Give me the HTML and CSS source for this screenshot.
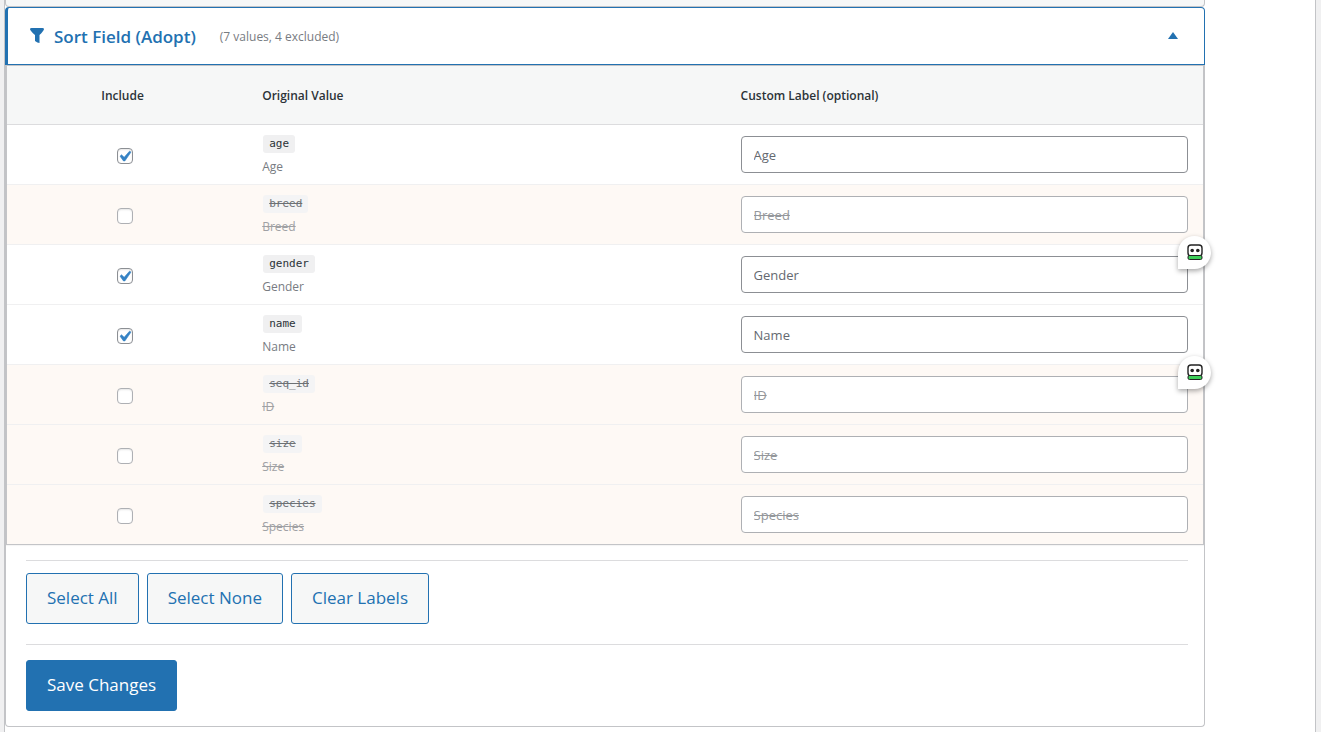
FILE: index.html
```
<!DOCTYPE html>
<html lang="en">
<head>
    <meta charset="UTF-8">
    <meta name="viewport" content="width=device-width, initial-scale=1.0">
    <title>Filter Values</title>
    <link rel="stylesheet" href="styles.css">
</head>
<body>

<main class="panel">
    <div class="group-closed"></div>

    <section class="group">
        <button type="button" class="group-header" aria-expanded="true">
            <svg class="icon-filter" viewBox="0 0 20 20" aria-hidden="true"><path d="M3 3.2Q3 2 4.5 2h11Q17 2 17 3.2 16.600 5 12.500 9v8q-2-.2-4.500-2V9Q3.400 5 3 3.200z"/></svg>
            <span class="group-title">Sort Field (Adopt)</span>
            <span class="group-count">(7 values, 4 excluded)</span>
            <svg class="icon-arrow" viewBox="0 0 10 8" aria-hidden="true"><path d="M0 7L5 0l5 7z"/></svg>
        </button>

        <div class="group-body">
            <table class="values">
                <thead>
                    <tr>
                        <th class="col-include">Include</th>
                        <th class="col-value">Original Value</th>
                        <th class="col-label">Custom Label (optional)</th>
                    </tr>
                </thead>
                <tbody>
                    <tr>
                        <td class="col-include"><input type="checkbox" id="inc-age" aria-label="Include age" checked></td>
                        <td><code>age</code><label class="name" for="inc-age">Age</label></td>
                        <td><input type="text" placeholder="Age" aria-label="Custom label for age"></td>
                    </tr>
                    <tr class="excluded">
                        <td class="col-include"><input type="checkbox" id="inc-breed" aria-label="Include breed"></td>
                        <td><code>breed</code><label class="name" for="inc-breed">Breed</label></td>
                        <td><input type="text" placeholder="Breed" aria-label="Custom label for breed"></td>
                    </tr>
                    <tr>
                        <td class="col-include"><input type="checkbox" id="inc-gender" aria-label="Include gender" checked></td>
                        <td><code>gender</code><label class="name" for="inc-gender">Gender</label></td>
                        <td>
                            <input type="text" placeholder="Gender" aria-label="Custom label for gender">
                            <span class="autofill"><svg viewBox="0 0 16 17" aria-hidden="true"><rect x="1" y="1" width="14" height="11" rx="3" fill="#fff" stroke="#222" stroke-width="1.4"/><rect x="1" y="11.5" width="14" height="4" rx="1.5" fill="#3ecf5a" stroke="#222"/><circle cx="5.2" cy="6.5" r="1.8" fill="#222"/><circle cx="10.8" cy="6.5" r="1.8" fill="#222"/></svg></span>
                        </td>
                    </tr>
                    <tr>
                        <td class="col-include"><input type="checkbox" id="inc-name" aria-label="Include name" checked></td>
                        <td><code>name</code><label class="name" for="inc-name">Name</label></td>
                        <td><input type="text" placeholder="Name" aria-label="Custom label for name"></td>
                    </tr>
                    <tr class="excluded">
                        <td class="col-include"><input type="checkbox" id="inc-seq" aria-label="Include seq_id"></td>
                        <td><code>seq_id</code><label class="name" for="inc-seq">ID</label></td>
                        <td>
                            <input type="text" placeholder="ID" aria-label="Custom label for seq_id">
                            <span class="autofill"><svg viewBox="0 0 16 17" aria-hidden="true"><rect x="1" y="1" width="14" height="11" rx="3" fill="#fff" stroke="#222" stroke-width="1.4"/><rect x="1" y="11.5" width="14" height="4" rx="1.5" fill="#3ecf5a" stroke="#222"/><circle cx="5.2" cy="6.5" r="1.8" fill="#222"/><circle cx="10.8" cy="6.5" r="1.8" fill="#222"/></svg></span>
                        </td>
                    </tr>
                    <tr class="excluded">
                        <td class="col-include"><input type="checkbox" id="inc-size" aria-label="Include size"></td>
                        <td><code>size</code><label class="name" for="inc-size">Size</label></td>
                        <td><input type="text" placeholder="Size" aria-label="Custom label for size"></td>
                    </tr>
                    <tr class="excluded">
                        <td class="col-include"><input type="checkbox" id="inc-species" aria-label="Include species"></td>
                        <td><code>species</code><label class="name" for="inc-species">Species</label></td>
                        <td><input type="text" placeholder="Species" aria-label="Custom label for species"></td>
                    </tr>
                </tbody>
            </table>

            <div class="actions">
                <button type="button" class="button">Select All</button>
                <button type="button" class="button">Select None</button>
                <button type="button" class="button">Clear Labels</button>
            </div>
            <div class="actions save">
                <button type="submit" class="button button-primary">Save Changes</button>
            </div>
        </div>
    </section>
</main>

</body>
</html>
```
FILE: styles.css
```
* {
    box-sizing: border-box;
}
body {
    margin: 0;
    background: #f0f0f1;
    color: #2c3338;
    font-family: "Open Sans", "Noto Sans", sans-serif;
    font-size: 13px;
}
.panel {
    min-height: 100vh;
    margin: 0 5px 0 4px;
    background: #fff;
    border: solid #c3c4c7;
    border-width: 0 1px;
}
.group-closed {
    max-width: 1200px;
    height: 7px;
    background: #f6f7f7;
    border: 1px solid #c3c4c7;
    border-top: 0;
    border-radius: 0 0 4px 4px;
}
.group {
    max-width: 1200px;
}
.group-header {
    display: flex;
    align-items: center;
    width: 100%;
    height: 58px;
    padding: 0 26px 0 19px;
    background: #fff;
    border: 1px solid #2271b1;
    border-left-width: 3px;
    border-radius: 4px 4px 0 0;
    color: #2271b1;
    font-family: inherit;
    text-align: left;
    cursor: pointer;
}
.icon-filter {
    width: 20px;
    height: 20px;
    fill: currentColor;
}
.group-title {
    margin-left: 7px;
    font-size: 17px;
    font-weight: 600;
}
.group-count {
    margin-left: 24px;
    color: #787c82;
    font-size: 12px;
}
.icon-arrow {
    width: 10px;
    height: 8px;
    margin-left: auto;
    fill: currentColor;
}
.group-body {
    padding-bottom: 15px;
    border: 1px solid #c3c4c7;
    border-top: 0;
    border-radius: 0 0 4px 4px;
}

/* values table */
.values {
    width: 100%;
    table-layout: fixed;
    border-collapse: separate;
    border-spacing: 0;
    border: 1px solid #c3c4c7;
    box-shadow: 0 1px 1px rgba(0, 0, 0, 0.04);
}
.values th {
    height: 59px;
    padding: 0 15px 0 16px;
    background: #f6f7f7;
    border-bottom: 1px solid #dcdcde;
    font-size: 12px;
    font-weight: 600;
    text-align: left;
}
.values td {
    position: relative;
    height: 60px;
    padding: 0 15px 0 16px;
    border-bottom: 1px solid #f0f0f1;
    vertical-align: middle;
}
.values tr:last-child td {
    height: 59px;
    border-bottom: 0;
}
.values .col-include {
    width: 20%;
    padding-right: 24px;
    text-align: center;
}
.values .col-value {
    width: 40%;
}
code {
    display: table;
    margin: 1px 1px 5px;
    padding: 0 6px;
    background: #f0f0f1;
    border-radius: 3px;
    font-family: "DejaVu Sans Mono", monospace;
    font-size: 11px;
    line-height: 18px;
}
.name {
    display: block;
    color: #787c82;
    font-size: 12px;
    line-height: 17px;
}
input[type="checkbox"] {
    appearance: none;
    width: 16px;
    height: 16px;
    margin: 2px 0 0 4px;
    background: #fff;
    border: 1px solid #8c8f94;
    border-radius: 4px;
    box-shadow: inset 0 1px 2px rgba(0, 0, 0, 0.1);
    vertical-align: middle;
}
input[type="checkbox"]:checked {
    background: #fff url("data:image/svg+xml,%3Csvg xmlns='http://www.w3.org/2000/svg' viewBox='0 0 20 20'%3E%3Cpath d='M14.83 4.89l1.34.94-5.81 8.38H9.02L5.78 9.67l1.34-1.25 2.57 2.4z' fill='%233582c4' stroke='%233582c4' stroke-width='.6'/%3E%3C/svg%3E") center / 21px no-repeat;
    background-position: -4px -3px;
}
input[type="text"] {
    display: block;
    width: 100%;
    height: 37px;
    padding: 0 12px;
    background: #fff;
    border: 1px solid #8c8f94;
    border-radius: 4px;
    color: #2c3338;
    font-family: inherit;
    font-size: 13px;
}
input::placeholder {
    color: #646970;
    opacity: 1;
}
.excluded td {
    background: #fef9f5;
}
.excluded code {
    background: #f4f4f5;
    color: #6d7175;
    text-decoration: line-through;
}
.excluded .name {
    color: #a0a1a4;
    text-decoration: line-through;
}
.excluded input {
    border-color: #aeb0b4;
}
.excluded input::placeholder {
    color: #94979b;
    text-decoration: line-through;
}
.autofill {
    position: absolute;
    top: -9px;
    right: -8px;
    z-index: 1;
    display: flex;
    align-items: center;
    justify-content: center;
    width: 33px;
    height: 33px;
    background: #fff;
    border-radius: 17px 17px 17px 0;
    box-shadow: 0 2px 5px rgba(0, 0, 0, 0.35);
}
.autofill svg {
    width: 16px;
    height: 17px;
}

/* buttons */
.actions {
    display: flex;
    gap: 8px;
    margin: 15px 16px 0 20px;
    padding-top: 12px;
    border-top: 1px solid #dcdcde;
}
.save {
    margin-top: 20px;
    padding-top: 15px;
}
.button {
    height: 51px;
    padding: 0 20px 2px;
    background: #f6f7f7;
    border: 1px solid #2271b1;
    border-radius: 3px;
    color: #2271b1;
    font-family: inherit;
    font-size: 17px;
    cursor: pointer;
}
.button-primary {
    background: #2271b1;
    color: #fff;
}
```
